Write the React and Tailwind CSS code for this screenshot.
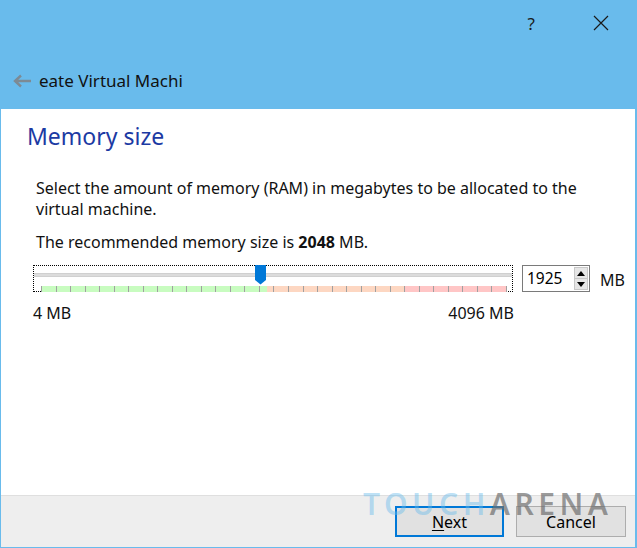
import React from 'react';

const TICKS = Array.from({ length: 33 }, (_, i) => i);

function BackArrow() {
  return (
    <svg width="19" height="14" viewBox="0 0 19 14" className="shrink-0">
      <path d="M2 7h16M8 1.5L2 7l6 5.5" fill="none" stroke="#7d8a94" strokeWidth="2.4" />
    </svg>
  );
}

function MemorySlider() {
  return (
    <div className="relative w-[480px] h-[27px] border border-dotted border-black">
      {/* groove */}
      <div className="absolute left-0 right-0 top-[7px] h-[4px] bg-[#dcdcdc] border-y border-[#d0d0d0]" />
      {/* colour bands under the groove */}
      <div className="absolute left-[7px] top-[20px] h-[6px] w-[466px] flex">
        <div className="w-[226px] bg-[#c8fcc0]" />
        <div className="w-[137px] bg-[#fdd7c2]" />
        <div className="flex-1 bg-[#ffc6c6]" />
      </div>
      {TICKS.map((t) => (
        <div
          key={t}
          className="absolute top-[20px] h-[6px] w-px bg-[#a0a0a0]"
          style={{ left: 7 + t * 14.53 }}
        />
      ))}
      {/* handle */}
      <svg className="absolute left-[221px] top-[-1px]" width="11" height="20" viewBox="0 0 11 20">
        <path d="M0 0h11v15l-5.5 4.5L0 15z" fill="#0078d7" />
      </svg>
    </div>
  );
}

function SpinBox({ value }) {
  return (
    <div className="flex items-center w-[68px] h-[27px] border border-[#7a7a7a] bg-white pl-[4px] pr-[1px]">
      <span className="flex-1 text-[15.5px] text-black leading-none">{value}</span>
      <div className="flex flex-col w-[14px] h-[23px] bg-[#e6e6e6] border border-[#c8c8c8]">
        <div className="flex-1 flex items-center justify-center border-b border-[#c8c8c8]">
          <svg width="8" height="5" viewBox="0 0 8 5"><path d="M0 5L4 0l4 5z" fill="#000" /></svg>
        </div>
        <div className="flex-1 flex items-center justify-center">
          <svg width="8" height="5" viewBox="0 0 8 5"><path d="M0 0h8L4 5z" fill="#000" /></svg>
        </div>
      </div>
    </div>
  );
}

export default function App() {
  return (
    <div
      className="relative w-[637px] h-[548px] flex flex-col bg-white border-l border-r-2 border-b border-[#69bbec] overflow-hidden"
      style={{ fontFamily: '"Noto Sans", "Open Sans", sans-serif' }}
    >
      {/* caption + wizard title */}
      <div className="h-[109px] bg-[#69bbec] flex flex-col">
        <div className="h-[46px] flex items-center justify-end pr-[26px] gap-[58px] text-[#1a1a1a]">
          <span className="text-[17px] leading-none">?</span>
          <svg width="16" height="16" viewBox="0 0 16 16">
            <path d="M1 1l14 14M15 1L1 15" stroke="#1a1a1a" strokeWidth="1.2" />
          </svg>
        </div>
        <div className="flex-1 flex items-center gap-[7px] pl-[12px] pt-[6px]">
          <BackArrow />
          <span className="text-[17px] text-[#111]">eate Virtual Machi</span>
        </div>
      </div>

      {/* page body */}
      <div className="flex-1 flex flex-col pl-[26px] pt-[12px]">
        <h1 className="text-[23px] leading-[30px] text-[#1c3aa3]">Memory size</h1>
        <div className="w-[560px] pl-[9px] pt-[27px] text-[16px] leading-[21px] text-[#111]">
          <p>Select the amount of memory (RAM) in megabytes to be allocated to the virtual machine.</p>
          <p className="mt-[12px]">
            The recommended memory size is <b>2048</b> MB.
          </p>
        </div>
        <div className="flex items-start pl-[6px] pt-[12px]">
          <MemorySlider />
          <div className="ml-[9px]">
            <SpinBox value="1925" />
          </div>
          <span className="ml-[10px] mt-[3px] text-[16px] text-[#111]">MB</span>
        </div>
        <div className="w-[487px] flex justify-between pl-[6px] pt-[9px] text-[16px] text-[#111]">
          <span>4 MB</span>
          <span>4096 MB</span>
        </div>
      </div>

      {/* button strip */}
      <div className="h-[52px] bg-[#eeeeee] border-t border-[#dfdfdf] flex items-start justify-end gap-[12px] pt-[10px] pr-[9px]">
        <button className="w-[109px] h-[31px] bg-[#e1e1e1] border-2 border-[#0078d7] text-[16px] text-black">
          <span className="underline underline-offset-2">N</span>ext
        </button>
        <button className="w-[110px] h-[31px] bg-[#e1e1e1] border border-[#adadad] text-[16px] text-black">
          Cancel
        </button>
      </div>

      {/* watermark */}
      <div className="absolute left-[362px] top-[489px] flex text-[30px] font-semibold tracking-[4.5px] leading-none pointer-events-none">
        <span className="text-[#69bbec]/45">TOUCH</span>
        <span className="text-[#6e6e6e]/70">ARENA</span>
      </div>
    </div>
  );
}
